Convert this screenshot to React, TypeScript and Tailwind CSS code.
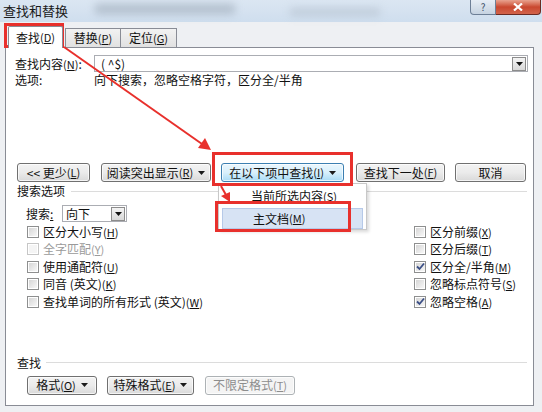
import React from "react";

const Key = ({ k }: { k: string }) => (
  <span className="text-[11px]">
    (<span className="underline">{k}</span>)
  </span>
);

const Caret = ({ light }: { light?: boolean }) => (
  <svg width="7" height="4" viewBox="0 0 7 4" className="ml-[5px]">
    <path d="M0 0 L7 0 L3.5 4 Z" fill={light ? "#9a9a9a" : "#1b1b1b"} />
  </svg>
);

interface BtnProps {
  children: React.ReactNode;
  w: string;
  blue?: boolean;
  disabled?: boolean;
}

const Btn = ({ children, w, blue, disabled }: BtnProps) => {
  let cls =
    "border-[#707070] bg-gradient-to-b from-[#f3f3f3] via-[#ebebeb] to-[#d9d9d9] text-[#111]";
  if (blue)
    cls =
      "border-[#3c7fb1] bg-gradient-to-b from-[#eaf6fd] via-[#d9f0fc] to-[#a9dbf6] text-[#111]";
  if (disabled) cls = "border-[#adb2b5] bg-[#f4f4f4] text-[#8d8d8d]";
  return (
    <div
      className={`${w} h-[19px] rounded-[3px] border flex items-center justify-center text-[12px] leading-none shadow-[inset_0_0_0_1px_rgba(255,255,255,0.7)] ${cls}`}
    >
      {children}
    </div>
  );
};

const Check = ({
  label,
  checked,
  disabled,
}: {
  label: React.ReactNode;
  checked?: boolean;
  disabled?: boolean;
}) => (
  <div className="flex items-center h-[17.5px]">
    <span
      className={`w-[12px] h-[12px] border ${
        disabled ? "border-[#c6c6c6]" : "border-[#8e8f8f]"
      } bg-white p-px flex`}
    >
      <span
        className={`flex-1 flex items-center justify-center ${
          disabled
            ? "bg-[#f4f4f4]"
            : "bg-gradient-to-br from-[#d6d6d6] to-[#f7f7f7]"
        }`}
      >
        {checked && (
          <svg width="9" height="9" viewBox="0 0 9 9">
            <path
              d="M1 4.5 L3.5 7 L8 1.5"
              stroke="#3b4f86"
              strokeWidth="1.8"
              fill="none"
            />
          </svg>
        )}
      </span>
    </span>
    <span
      className={`ml-[4px] text-[12px] ${
        disabled ? "text-[#9a9a9a]" : "text-[#111]"
      }`}
    >
      {label}
    </span>
  </div>
);

const DropBtn = () => (
  <span className="w-[14px] h-[14px] border border-[#8c8c8c] bg-gradient-to-b from-[#f4f4f4] to-[#d8d8d8] flex items-center justify-center">
    <svg width="7" height="4" viewBox="0 0 7 4">
      <path d="M0 0 L7 0 L3.5 4 Z" fill="#111" />
    </svg>
  </span>
);

export default function App() {
  return (
    <div className="w-[542px] h-[412px] bg-[#eef0f3] relative overflow-hidden font-['Noto_Sans_CJK_SC','Liberation_Sans',sans-serif] text-[#111]">
      {/* title bar */}
      <div className="h-[22px] flex justify-between bg-gradient-to-b from-[#dbe6f2] to-[#cfdeee] relative">
        <div className="pl-[3px] pt-[2px] text-[13px] leading-[18px] text-[#1a1a1a] relative z-10">
          查找和替换
        </div>
        <div className="absolute left-[95px] top-[4px] w-[140px] h-[10px] bg-[#9aa7b5] blur-[4px] opacity-60" />
        <div className="absolute left-[290px] top-[8px] w-[90px] h-[8px] bg-[#aab6c3] blur-[4px] opacity-50" />
        <div className="flex self-start mr-[1px] relative z-10">
          <div className="w-[26px] h-[15px] border border-t-0 border-[#6d7f96] rounded-bl-[4px] bg-gradient-to-b from-[#e6edf5] to-[#c6d3e1] text-center text-[10px] leading-[14px] text-[#3d4f66]">
            ?
          </div>
          <div className="w-[45px] h-[15px] border border-t-0 border-l-0 border-[#6b2a22] rounded-br-[4px] bg-gradient-to-b from-[#e8a28f] via-[#c9472f] to-[#d2634a] flex items-center justify-center">
            <svg width="10" height="8" viewBox="0 0 10 8">
              <path d="M1 0.5 L9 7.5 M9 0.5 L1 7.5" stroke="#fff" strokeWidth="2.2" />
            </svg>
          </div>
        </div>
      </div>

      <div className="pl-[5px] pt-[4px]">
        {/* tabs */}
        <div className="flex items-end h-[21px] pl-[3px] relative z-10">
          <div className="w-[55px] h-[22px] -mb-px bg-white border border-b-0 border-[#898c95] rounded-t-[2px] flex items-center justify-center text-[12px]">
            查找<Key k="D" />
          </div>
          <div className="w-[56px] h-[19px] ml-[2px] bg-gradient-to-b from-[#f2f2f2] to-[#e1e1e1] border border-b-0 border-[#898c95] flex items-center justify-center text-[12px]">
            替换<Key k="P" />
          </div>
          <div className="w-[56px] h-[19px] bg-gradient-to-b from-[#f2f2f2] to-[#e1e1e1] border border-b-0 border-l-0 border-[#898c95] flex items-center justify-center text-[12px]">
            定位<Key k="G" />
          </div>
        </div>

        {/* panel */}
        <div className="w-[529px] h-[359px] bg-white border border-[#898c95] flex flex-col">
          <div className="mt-[7px] flex items-center h-[17px] pl-[9px] pr-[5px]">
            <span className="w-[79px] text-[12px]">
              查找内容<Key k="N" />:
            </span>
            <div className="flex-1 h-[17px] border border-[#abadb3] flex items-center justify-between pl-[6px] pr-px">
              <span className="text-[12px]">( ^$)</span>
              <DropBtn />
            </div>
          </div>
          <div className="mt-px flex items-center h-[14px] pl-[9px] text-[12px]">
            <span className="w-[79px]">选项:</span>
            <span>向下搜索，忽略空格字符，区分全/半角</span>
          </div>

          {/* button row */}
          <div className="mt-[76px] flex items-center pl-[11px]">
            <Btn w="w-[73px]">
              &lt;&lt; 更少<Key k="L" />
            </Btn>
            <div className="ml-[11px]">
              <Btn w="w-[110px]">
                阅读突出显示<Key k="R" />
                <Caret />
              </Btn>
            </div>
            <div className="ml-[10px]">
              <Btn w="w-[123px]" blue>
                在以下项中查找<Key k="I" />
                <Caret />
              </Btn>
            </div>
            <div className="ml-[12px]">
              <Btn w="w-[89px]">
                查找下一处<Key k="F" />
              </Btn>
            </div>
            <div className="ml-[10px]">
              <Btn w="w-[71px]">取消</Btn>
            </div>
          </div>

          <div className="mt-[2px] flex items-center h-[14px] pl-[11px] pr-[6px]">
            <span className="text-[12px]">搜索选项</span>
            <span className="flex-1 ml-[6px] h-px bg-[#dcdcdc]" />
          </div>

          <div className="mt-[7px] flex items-center h-[17px] pl-[20px]">
            <span className="w-[36px] text-[12px]">
              搜索<span className="underline">:</span>
            </span>
            <div className="w-[65px] h-[17px] border border-[#abadb3] flex items-center justify-between pl-[3px] pr-px">
              <span className="text-[12px]">向下</span>
              <DropBtn />
            </div>
          </div>

          <div className="mt-px flex pl-[21px]">
            <div className="w-[387px] flex flex-col">
              <Check label={<>区分大小写<Key k="H" /></>} />
              <Check label={<>全字匹配<Key k="Y" /></>} disabled />
              <Check label={<>使用通配符<Key k="U" /></>} />
              <Check label={<>同音 (英文)<Key k="K" /></>} />
              <Check label={<>查找单词的所有形式 (英文)<Key k="W" /></>} />
            </div>
            <div className="flex flex-col">
              <Check label={<>区分前缀<Key k="X" /></>} />
              <Check label={<>区分后缀<Key k="T" /></>} />
              <Check label={<>区分全/半角<Key k="M" /></>} checked />
              <Check label={<>忽略标点符号<Key k="S" /></>} />
              <Check label={<>忽略空格<Key k="A" /></>} checked />
            </div>
          </div>

          <div className="mt-[45px] flex items-center h-[14px] pl-[11px] pr-[6px]">
            <span className="text-[12px]">查找</span>
            <span className="flex-1 ml-[5px] h-px bg-[#dcdcdc]" />
          </div>
          <div className="mt-[6px] flex items-center pl-[21px]">
            <Btn w="w-[70px]">
              格式<Key k="O" />
              <Caret />
            </Btn>
            <div className="ml-[10px]">
              <Btn w="w-[87px]">
                特殊格式<Key k="E" />
                <Caret />
              </Btn>
            </div>
            <div className="ml-[11px]">
              <Btn w="w-[90px]" disabled>
                不限定格式<Key k="T" />
              </Btn>
            </div>
          </div>
        </div>
      </div>

      {/* dropdown menu */}
      <div className="absolute left-[218px] top-[183px] w-[149px] h-[47px] bg-white border border-[#c8c8c8] shadow-[2px_2px_3px_rgba(0,0,0,0.15)] flex flex-col pt-[3px] px-[3px]">
        <div className="h-[18px] flex items-center pl-[29px] text-[12px]">
          当前所选内容<Key k="S" />
        </div>
        <div className="mt-[3px] h-[21px] bg-[#d7e3f4] border border-[#b6c9e8] flex items-center pl-[30px] text-[12px]">
          主文档<Key k="M" />
        </div>
      </div>

      {/* red highlight boxes */}
      <div className="absolute left-[4px] top-[23px] w-[60px] h-[25px] border-[3px] border-[#e8302c]" />
      <div className="absolute left-[212px] top-[152px] w-[141px] h-[34px] border-[3px] border-[#e8302c]" />
      <div className="absolute left-[215px] top-[201px] w-[136px] h-[31px] border-[3px] border-[#e8302c]" />

      {/* arrows */}
      <svg
        className="absolute left-0 top-0 pointer-events-none"
        width="542"
        height="412"
        viewBox="0 0 542 412"
      >
        <line x1="64" y1="47" x2="202" y2="144" stroke="#e8302c" strokeWidth="2" />
        <path d="M211 150 L198 148 L205 138 Z" fill="#e8302c" />
        <line x1="221" y1="186" x2="226" y2="195" stroke="#e8302c" strokeWidth="2" />
        <path d="M230 202 L221 196 L230 192 Z" fill="#e8302c" />
      </svg>
    </div>
  );
}
